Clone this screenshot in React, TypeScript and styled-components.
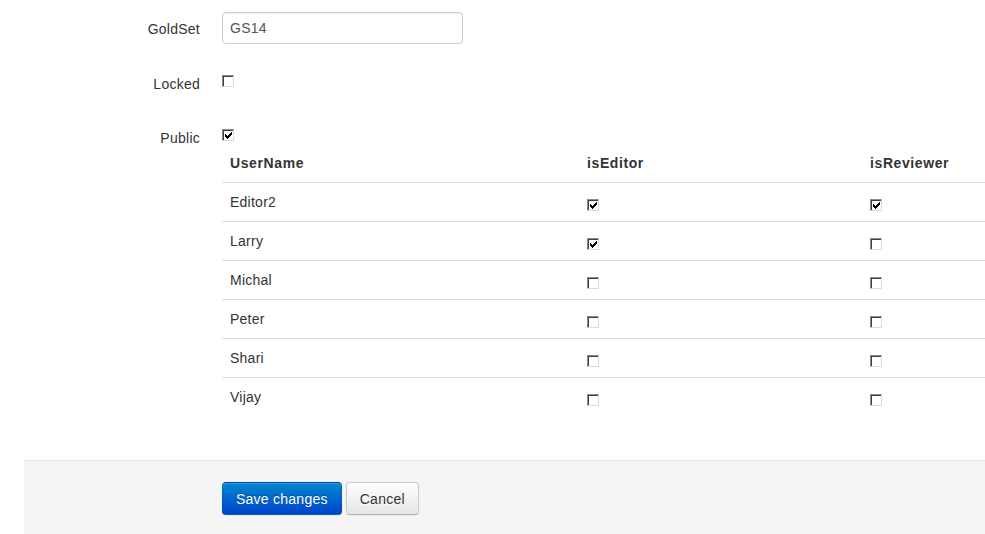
import styled, { createGlobalStyle } from 'styled-components'

type UserRow = {
  name: string
  isEditor: boolean
  isReviewer: boolean
}

const users: UserRow[] = [
  { name: 'Editor2', isEditor: true, isReviewer: true },
  { name: 'Larry', isEditor: true, isReviewer: false },
  { name: 'Michal', isEditor: false, isReviewer: false },
  { name: 'Peter', isEditor: false, isReviewer: false },
  { name: 'Shari', isEditor: false, isReviewer: false },
  { name: 'Vijay', isEditor: false, isReviewer: false }
]

// classic pixel check mark, one [x, y, width] run per row
const checkRuns: [number, number, number][] = [
  [6, 0, 1],
  [5, 1, 2],
  [0, 2, 1],
  [4, 2, 3],
  [0, 3, 2],
  [3, 3, 3],
  [0, 4, 5],
  [1, 5, 3],
  [2, 6, 1]
]

const CheckBox = ({ checked }: { checked: boolean }) => (
  <Box>
    {checked && (
      <svg width="7" height="7" viewBox="0 0 7 7" shapeRendering="crispEdges">
        {checkRuns.map(([x, y, w]) => (
          <rect key={`${x}-${y}`} x={x} y={y} width={w} height={1} fill="#000" />
        ))}
      </svg>
    )}
  </Box>
)

const App = () => {
  return (
    <Page>
      <GlobalStyle />

      <FieldRow $spacing={30}>
        <FieldLabel $offset={7}>GoldSet</FieldLabel>
        <Controls>
          <TextInput defaultValue="GS14" />
        </Controls>
      </FieldRow>

      <FieldRow $spacing={34}>
        <FieldLabel $offset={0}>Locked</FieldLabel>
        <Controls>
          <CheckBox checked={false} />
        </Controls>
      </FieldRow>

      <FieldRow $spacing={0}>
        <FieldLabel $offset={0}>Public</FieldLabel>
        <Controls>
          <CheckBox checked />
          <UserTable>
            <colgroup>
              <col style={{ width: 357 }} />
              <col style={{ width: 283 }} />
              <col />
            </colgroup>
            <thead>
              <tr>
                <HeadCell>UserName</HeadCell>
                <HeadCell>isEditor</HeadCell>
                <HeadCell>isReviewer</HeadCell>
              </tr>
            </thead>
            <tbody>
              {users.map((user) => (
                <tr key={user.name}>
                  <BodyCell>{user.name}</BodyCell>
                  <CheckCell>
                    <CheckBox checked={user.isEditor} />
                  </CheckCell>
                  <CheckCell>
                    <CheckBox checked={user.isReviewer} />
                  </CheckCell>
                </tr>
              ))}
            </tbody>
          </UserTable>
        </Controls>
      </FieldRow>

      <FormActions>
        <Button $primary type="button">
          Save changes
        </Button>
        <Button type="button">Cancel</Button>
      </FormActions>
    </Page>
  )
}

const GlobalStyle = createGlobalStyle`
  html, body {
    margin: 0;
    background: #fff;
    overflow: hidden;
  }

  body {
    font-family: "Liberation Sans", Arial, sans-serif;
    font-size: 14px;
    line-height: 20px;
    letter-spacing: 0.25px;
    color: #333;
  }
`

const Page = styled.div`
  padding-top: 12px;
  min-height: 534px;
  box-sizing: border-box;
`

const FieldRow = styled.div<{ $spacing: number }>`
  display: grid;
  grid-template-columns: 200px 1fr;
  column-gap: 22px;
  align-items: start;
  margin-bottom: ${({ $spacing }) => $spacing}px;
`

const FieldLabel = styled.label<{ $offset: number }>`
  padding-top: ${({ $offset }) => $offset}px;
  line-height: 20px;
  text-align: right;
  color: #333;
`

const Controls = styled.div`
  display: flex;
  flex-direction: column;
  align-items: flex-start;
  min-width: 0;
`

const TextInput = styled.input`
  box-sizing: border-box;
  width: 241px;
  height: 32px;
  padding: 0 7px;
  border: 1px solid #ccc;
  border-radius: 4px;
  box-shadow: inset 0 1px 1px rgba(0, 0, 0, 0.075);
  font-family: "Liberation Sans", Arial, sans-serif;
  font-size: 14px;
  letter-spacing: 0.25px;
  color: #555;
  outline: none;
`

const Box = styled.span`
  box-sizing: border-box;
  display: flex;
  align-items: center;
  justify-content: center;
  width: 12px;
  height: 12px;
  margin-top: 1px;
  padding: 1px 0 0 1px;
  border-style: solid;
  border-width: 1px;
  border-color: #8a8a8a #dcdad4 #dcdad4 #8a8a8a;
  box-shadow: inset 1px 1px 0 #404040;
  background: #fff;
`

const UserTable = styled.table`
  width: 100%;
  margin-top: 2px;
  table-layout: fixed;
  border-collapse: collapse;
  border-spacing: 0;
`

const HeadCell = styled.th`
  padding: 10px 8px 9px;
  line-height: 20px;
  text-align: left;
  font-weight: bold;
  letter-spacing: 0.6px;
  color: #333;
  white-space: nowrap;
`

const BodyCell = styled.td`
  padding: 9px 8px;
  height: 20px;
  line-height: 20px;
  border-top: 1px solid #ddd;
  vertical-align: top;
`

const CheckCell = styled(BodyCell)`
  padding-top: 15px;
  padding-bottom: 0;
  height: 23px;
`

const FormActions = styled.div`
  display: flex;
  gap: 4px;
  margin: 44px 0 0 24px;
  padding: 21px 0 30px 198px;
  background: #f5f5f5;
  border-top: 1px solid #e5e5e5;
`

const Button = styled.button<{ $primary?: boolean }>`
  height: 33px;
  padding: 0 13px;
  border: 1px solid;
  border-radius: 4px;
  font-family: "Liberation Sans", Arial, sans-serif;
  font-size: 14px;
  line-height: 20px;
  letter-spacing: 0.25px;
  cursor: pointer;
  color: ${({ $primary }) => ($primary ? '#fff' : '#333')};
  background: ${({ $primary }) =>
    $primary ? 'linear-gradient(to bottom, #0088cc, #0044cc)' : 'linear-gradient(to bottom, #ffffff, #e6e6e6)'};
  border-color: ${({ $primary }) =>
    $primary
      ? 'rgba(0, 0, 0, 0.1) rgba(0, 0, 0, 0.1) rgba(0, 0, 0, 0.25)'
      : '#cccccc #cccccc #b3b3b3'};
  text-shadow: ${({ $primary }) => ($primary ? '0 -1px 0 rgba(0, 0, 0, 0.25)' : '0 1px 1px rgba(255, 255, 255, 0.75)')};
  box-shadow: inset 0 1px 0 rgba(255, 255, 255, 0.2), 0 1px 2px rgba(0, 0, 0, 0.05);
`

export default App
